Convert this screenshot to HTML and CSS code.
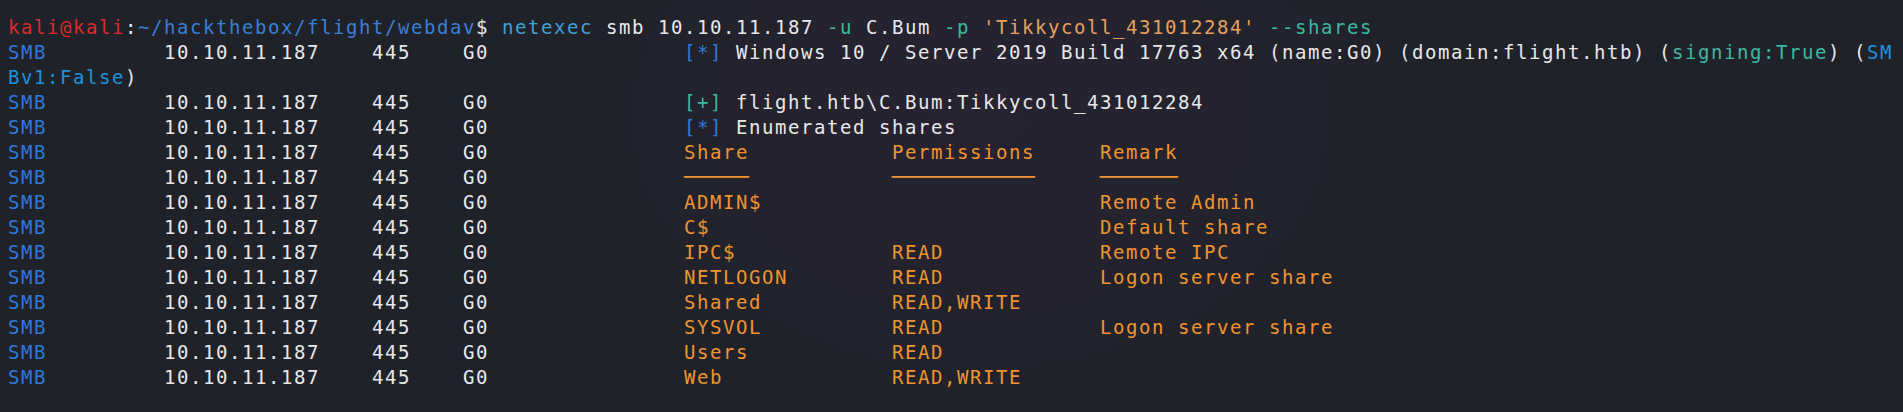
FILE: index.html
```html
<!DOCTYPE html>
<html>
<head>
<meta charset="utf-8">
<link rel="stylesheet" href="styles.css">
</head>
<body>
<div class="term">
<div class="ln"><span class="red">kali@kali</span>:<span class="path">~/hackthebox/flight/webdav</span>$ <span class="cmd">netexec</span> smb 10.10.11.187 <span class="opt">-u</span> C.Bum <span class="opt">-p</span> <span class="str">'Tikkycoll_431012284'</span> <span class="opt">--shares</span></div>
<div class="ln"><span class="smb">SMB</span>         10.10.11.187    445    G0               <span class="smb">[*]</span> Windows 10 / Server 2019 Build 17763 x64 (name:G0) (domain:flight.htb) (<span class="opt">signing:True</span>) (<span class="lb">SM</span></div>
<div class="ln"><span class="lb">Bv1:False</span>)</div>
<div class="ln"><span class="smb">SMB</span>         10.10.11.187    445    G0               <span class="opt">[+]</span> flight.htb\C.Bum:Tikkycoll_431012284</div>
<div class="ln"><span class="smb">SMB</span>         10.10.11.187    445    G0               <span class="smb">[*]</span> Enumerated shares</div>
<div class="ln"><span class="smb">SMB</span>         10.10.11.187    445    G0               <span class="org">Share           Permissions     Remark</span></div>
<div class="ln"><span class="smb">SMB</span>         10.10.11.187    445    G0               <span class="org dash">─────           ───────────     ──────</span></div>
<div class="ln"><span class="smb">SMB</span>         10.10.11.187    445    G0               <span class="org">ADMIN$                          Remote Admin</span></div>
<div class="ln"><span class="smb">SMB</span>         10.10.11.187    445    G0               <span class="org">C$                              Default share</span></div>
<div class="ln"><span class="smb">SMB</span>         10.10.11.187    445    G0               <span class="org">IPC$            READ            Remote IPC</span></div>
<div class="ln"><span class="smb">SMB</span>         10.10.11.187    445    G0               <span class="org">NETLOGON        READ            Logon server share</span></div>
<div class="ln"><span class="smb">SMB</span>         10.10.11.187    445    G0               <span class="org">Shared          READ,WRITE</span></div>
<div class="ln"><span class="smb">SMB</span>         10.10.11.187    445    G0               <span class="org">SYSVOL          READ            Logon server share</span></div>
<div class="ln"><span class="smb">SMB</span>         10.10.11.187    445    G0               <span class="org">Users           READ</span></div>
<div class="ln"><span class="smb">SMB</span>         10.10.11.187    445    G0               <span class="org">Web             READ,WRITE</span></div>
</div>
</body>
</html>
```
FILE: styles.css
```css
html, body {
  margin: 0;
  padding: 0;
  height: 100%;
}
body {
  background-color: #20222a;
  background-image: radial-gradient(ellipse 420px 300px at 980px 120px, rgba(70, 40, 80, 0.18), rgba(0, 0, 0, 0));
  overflow: hidden;
}
.term {
  padding: 15px 0 0 8px;
  font-family: "DejaVu Sans Mono", "Liberation Mono", monospace;
  font-size: 19px;
  letter-spacing: 1.56px;
  line-height: 25px;
  color: #e8e8ea;
}
.ln {
  white-space: pre;
  height: 25px;
}
.red { color: #dc2b2b; }
.path { color: #3a7fd6; }
.cmd { color: #41a0d2; }
.opt { color: #3db9a0; }
.str { color: #e4a160; }
.smb { color: #2f7ad8; }
.lb { color: #1f92dc; }
.org { color: #ef9430; }
.dash {
  font-size: 21.594px;
  letter-spacing: 0;
  line-height: 25px;
  vertical-align: top;
  position: relative;
  top: -1px;
}
```
